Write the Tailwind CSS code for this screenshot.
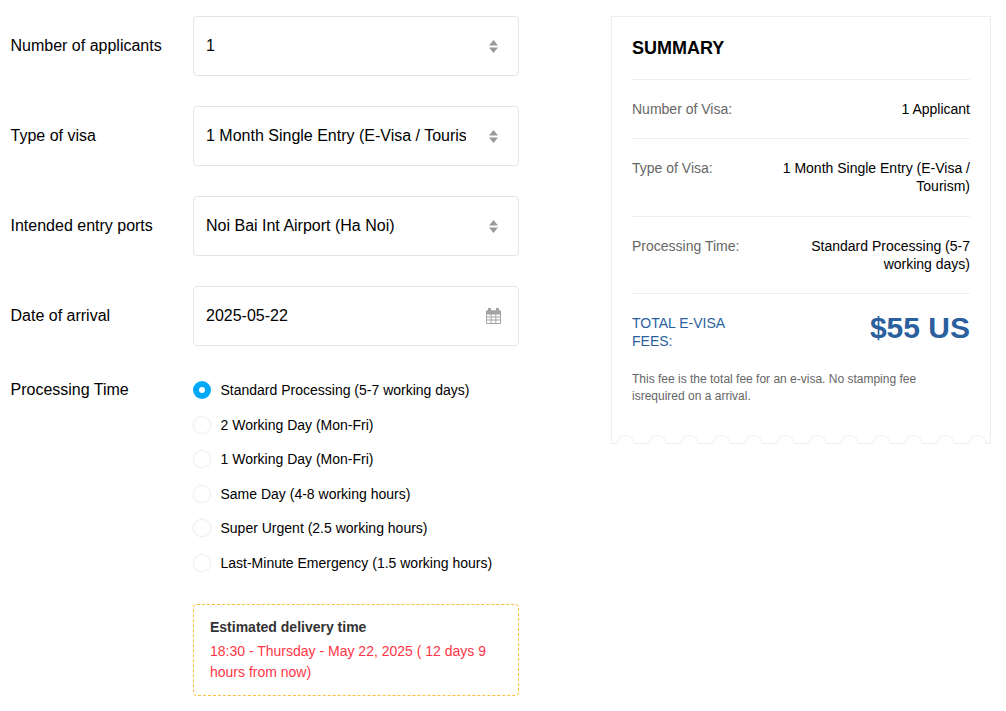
<!DOCTYPE html>
<html lang="en">
<head>
  <meta charset="UTF-8">
  <meta name="viewport" content="width=device-width, initial-scale=1.0">
  <title>Visa Application</title>
  <script src="https://cdn.jsdelivr.net/npm/@tailwindcss/browser@4"></script>
</head>
<body class="bg-white text-black font-['Liberation_Sans',Arial,sans-serif] overflow-hidden">
  <div class="flex items-start pt-4 pl-[10.5px]">

    <!-- form -->
    <div class="w-[508.5px] flex flex-col gap-[30px]">
      <div class="flex items-center">
        <label class="w-[182.5px] text-base">Number of applicants</label>
        <div class="relative w-[326px]">
          <select class="appearance-none w-full h-[60px] pl-3 pr-[52px] bg-white border border-[#e5e5e5] rounded text-base outline-none">
            <option>1</option>
          </select>
          <svg class="absolute right-[21px] top-[24px] pointer-events-none" width="9" height="13" viewBox="0 0 10 13" preserveAspectRatio="none" fill="#999"><path d="M5 0L10 5.5H0Z"/><path d="M0 7.5H10L5 13Z"/></svg>
        </div>
      </div>

      <div class="flex items-center">
        <label class="w-[182.5px] text-base">Type of visa</label>
        <div class="relative w-[326px]">
          <select class="appearance-none w-full h-[60px] pl-3 pr-[52px] bg-white border border-[#e5e5e5] rounded text-base outline-none">
            <option>1 Month Single Entry (E-Visa / Tourism)</option>
          </select>
          <svg class="absolute right-[21px] top-[24px] pointer-events-none" width="9" height="13" viewBox="0 0 10 13" preserveAspectRatio="none" fill="#999"><path d="M5 0L10 5.5H0Z"/><path d="M0 7.5H10L5 13Z"/></svg>
        </div>
      </div>

      <div class="flex items-center">
        <label class="w-[182.5px] text-base">Intended entry ports</label>
        <div class="relative w-[326px]">
          <select class="appearance-none w-full h-[60px] pl-3 pr-[52px] bg-white border border-[#e5e5e5] rounded text-base outline-none">
            <option>Noi Bai Int Airport (Ha Noi)</option>
          </select>
          <svg class="absolute right-[21px] top-[24px] pointer-events-none" width="9" height="13" viewBox="0 0 10 13" preserveAspectRatio="none" fill="#999"><path d="M5 0L10 5.5H0Z"/><path d="M0 7.5H10L5 13Z"/></svg>
        </div>
      </div>

      <div class="flex items-center">
        <label class="w-[182.5px] text-base">Date of arrival</label>
        <div class="relative w-[326px]">
          <input type="text" value="2025-05-22" readonly class="w-full h-[60px] pl-3 pr-[52px] bg-white border border-[#e5e5e5] rounded text-base outline-none">
          <svg class="absolute right-[18px] top-[22px] pointer-events-none" width="15" height="16" viewBox="0 0 15 16" fill="none" stroke="#a3a3a3">
            <path d="M0.5 3H14.5V15.5H0.5Z"/>
            <path d="M0.5 3H14.5V6H0.5Z" fill="#a3a3a3"/>
            <path d="M3.5 0.5V4M11.5 0.5V4" stroke-width="3" stroke-linecap="round"/>
            <path d="M5.17 6V15M9.83 6V15M0.5 9H14.5M0.5 12H14.5"/>
          </svg>
        </div>
      </div>

      <div class="flex items-start">
        <div class="w-[182.5px] text-base leading-[18px] pt-[5px]">Processing Time</div>
        <div class="w-[326px]">
          <div class="flex flex-col gap-[14.5px] pt-[4px] text-sm leading-5">
            <label class="flex items-center gap-[9.5px]">
              <span class="w-[18px] h-[18px] rounded-full bg-[#03a9f9] flex items-center justify-center shrink-0"><span class="w-[6px] h-[6px] rounded-full bg-white"></span></span>
              Standard Processing (5-7 working days)
            </label>
            <label class="flex items-center gap-[9.5px]">
              <span class="w-[18px] h-[18px] rounded-full border border-[#f2f2f2] shadow-[0_0_2px_rgba(0,0,0,0.08)] bg-white shrink-0"></span>
              2 Working Day (Mon-Fri)
            </label>
            <label class="flex items-center gap-[9.5px]">
              <span class="w-[18px] h-[18px] rounded-full border border-[#f2f2f2] shadow-[0_0_2px_rgba(0,0,0,0.08)] bg-white shrink-0"></span>
              1 Working Day (Mon-Fri)
            </label>
            <label class="flex items-center gap-[9.5px]">
              <span class="w-[18px] h-[18px] rounded-full border border-[#f2f2f2] shadow-[0_0_2px_rgba(0,0,0,0.08)] bg-white shrink-0"></span>
              Same Day (4-8 working hours)
            </label>
            <label class="flex items-center gap-[9.5px]">
              <span class="w-[18px] h-[18px] rounded-full border border-[#f2f2f2] shadow-[0_0_2px_rgba(0,0,0,0.08)] bg-white shrink-0"></span>
              Super Urgent (2.5 working hours)
            </label>
            <label class="flex items-center gap-[9.5px]">
              <span class="w-[18px] h-[18px] rounded-full border border-[#f2f2f2] shadow-[0_0_2px_rgba(0,0,0,0.08)] bg-white shrink-0"></span>
              Last-Minute Emergency (1.5 working hours)
            </label>
          </div>

          <div class="mt-[31px] h-[92px] border border-dashed border-[#fbbf3f] rounded px-4 pt-3 text-sm">
            <div class="font-bold text-[#333] leading-5">Estimated delivery time</div>
            <div class="text-[#ff3547] leading-[21px] mt-1">18:30 - Thursday - May 22, 2025 ( 12 days 9 hours from now)</div>
          </div>
        </div>
      </div>
    </div>

    <!-- summary -->
    <div class="relative w-[380px] h-[427px] ml-[92px] border-t border-x border-[#eeeeee] px-5 text-sm leading-[18px]">
      <h2 class="text-lg font-bold leading-5 pt-[21px] pb-[21px] border-b border-[#eeeeee]">SUMMARY</h2>
      <div class="flex justify-between py-5 border-b border-[#eeeeee]">
        <span class="text-[#666]">Number of Visa:</span>
        <span class="w-[200px] text-right">1 Applicant</span>
      </div>
      <div class="flex justify-between pt-5 pb-[21px] border-b border-[#eeeeee]">
        <span class="text-[#666]">Type of Visa:</span>
        <span class="w-[200px] text-right">1 Month Single Entry (E-Visa / Tourism)</span>
      </div>
      <div class="flex justify-between py-5 border-b border-[#eeeeee]">
        <span class="text-[#666]">Processing Time:</span>
        <span class="w-[200px] text-right">Standard Processing (5-7 working days)</span>
      </div>
      <div class="flex justify-between pt-5">
        <span class="w-[110px] text-[#2b5f9e]">TOTAL E-VISA FEES:</span>
        <span class="text-[30px] font-bold text-[#2b5f9e] leading-[30px] -mt-px">$55 US</span>
      </div>
      <p class="text-xs leading-[17px] text-[#666] mt-[21px]">This fee is the total fee for an e-visa. No stamping fee isrequired on a arrival.</p>
      <svg class="absolute left-[-1px] bottom-[-1px]" width="380" height="9" viewBox="0 0 380 9" fill="none" stroke="#eeeeee">
        <path d="M0 8.5H6A8.5 8 0 0 1 23 8.5H38A8.5 8 0 0 1 55 8.5H70A8.5 8 0 0 1 87 8.5H102A8.5 8 0 0 1 119 8.5H134A8.5 8 0 0 1 151 8.5H166A8.5 8 0 0 1 183 8.5H198A8.5 8 0 0 1 215 8.5H230A8.5 8 0 0 1 247 8.5H262A8.5 8 0 0 1 279 8.5H294A8.5 8 0 0 1 311 8.5H326A8.5 8 0 0 1 343 8.5H358A8.5 8 0 0 1 375 8.5H380"/>
      </svg>
    </div>
  </div>
</body>
</html>
